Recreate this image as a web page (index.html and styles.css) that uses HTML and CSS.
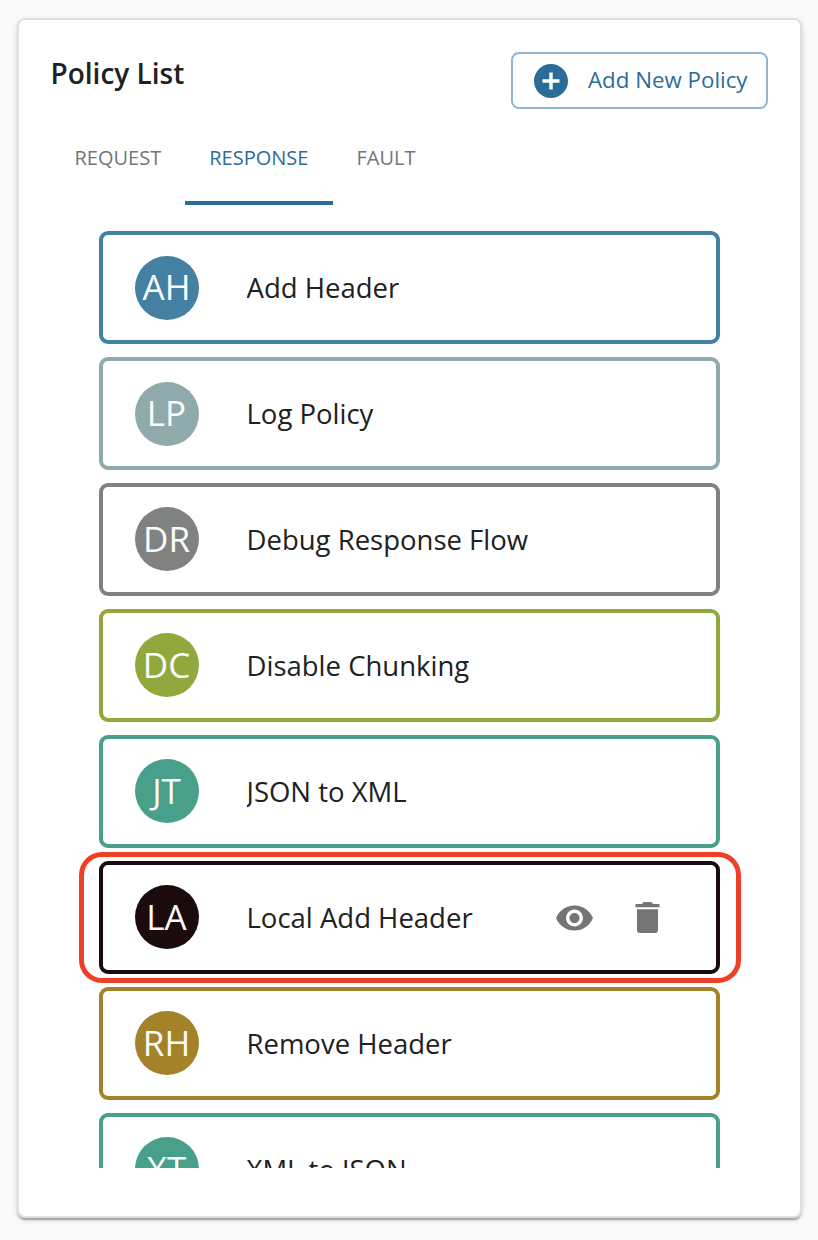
FILE: index.html
```html
<!DOCTYPE html>
<html lang="en">
<head>
<meta charset="utf-8">
<title>Policy List</title>
<link rel="stylesheet" href="styles.css">
</head>
<body>
<main class="panel">
  <header class="panel-header">
    <h2 class="title">Policy List</h2>
    <button class="add-button" type="button">
      <svg class="add-icon" viewBox="2 2 20 20"><path d="M12 2C6.48 2 2 6.48 2 12s4.48 10 10 10 10-4.48 10-10S17.52 2 12 2zm5 11h-4v4h-2v-4H7v-2h4V7h2v4h4v2z"/></svg>
      <span class="add-label">Add New Policy</span>
    </button>
  </header>
  <nav class="tabs">
    <a class="tab">REQUEST</a>
    <a class="tab active">RESPONSE</a>
    <a class="tab">FAULT</a>
  </nav>
  <div class="list">
    <div class="policy blue"><span class="avatar"><span class="initials">AH</span></span><span class="name">Add Header</span></div>
    <div class="policy mist"><span class="avatar"><span class="initials">LP</span></span><span class="name">Log Policy</span></div>
    <div class="policy gray"><span class="avatar"><span class="initials">DR</span></span><span class="name">Debug Response Flow</span></div>
    <div class="policy olive"><span class="avatar"><span class="initials">DC</span></span><span class="name">Disable Chunking</span></div>
    <div class="policy teal"><span class="avatar"><span class="initials">JT</span></span><span class="name">JSON to XML</span></div>
    <div class="policy black highlighted">
      <span class="avatar"><span class="initials">LA</span></span><span class="name">Local Add Header</span>
      <span class="actions">
        <svg class="eye-icon" viewBox="1 4.5 22 15"><path d="M12 4.5C7 4.5 2.73 7.61 1 12c1.73 4.39 6 7.5 11 7.5s9.270-3.110 11-7.500c-1.730-4.390-6-7.500-11-7.500zM12 17c-2.760 0-5-2.240-5-5s2.240-5 5-5 5 2.240 5 5-2.240 5-5 5zm0-8c-1.660 0-3 1.340-3 3s1.340 3 3 3 3-1.340 3-3-1.340-3-3-3z"/></svg>
        <svg class="trash-icon" viewBox="0 0 25 31"><path d="M0.500 2H7L8.500 0H16.500L18 2H24.500V5.300H0.500ZM2 7.200H23V28Q23 31 20 31H5Q2 31 2 28Z"/></svg>
      </span>
    </div>
    <div class="policy gold"><span class="avatar"><span class="initials">RH</span></span><span class="name">Remove Header</span></div>
    <div class="policy teal"><span class="avatar"><span class="initials">XT</span></span><span class="name">XML to JSON</span></div>
  </div>
</main>
</body>
</html>
```

FILE: styles.css
```css
* { box-sizing: border-box; }

body {
  margin: 0;
  padding: 18px 16px 0 17px;
  height: 1240px;
  overflow: hidden;
  background: #fafafa;
  color: #212121;
  font-family: "Open Sans", sans-serif;
}

.panel {
  height: 1200px;
  padding: 32px 32px 32px 31.500px;
  border: 2px solid #e0e0e0;
  border-radius: 8px;
  background: #fff;
  box-shadow: 0 4px 2px -2px rgba(0, 0, 0, .2), 0 2px 2px rgba(0, 0, 0, .14), 0 2px 6px rgba(0, 0, 0, .12);
}

.panel-header {
  display: flex;
  justify-content: space-between;
  height: 57px;
}

.title {
  margin: 2px 0 0;
  font-size: 28px;
  line-height: 38px;
  font-weight: 600;
}

.add-button {
  display: flex;
  align-items: center;
  gap: 20px;
  width: 257px;
  padding: 0 0 0 21px;
  border: 2px solid #95b5cc;
  border-radius: 8px;
  background: #fff;
  color: #2c6c98;
  font: 22.300px "Open Sans", sans-serif;
  white-space: nowrap;
}

.add-icon { width: 34px; height: 34px; fill: currentColor; }
.add-label { padding-bottom: 2px; }

.tabs {
  display: flex;
  height: 96px;
}

.tab {
  height: 96px;
  padding: 34px 24px 0;
  color: #757575;
  font-size: 20px;
  line-height: 30px;
}

.tab.active {
  width: 148px;
  margin-right: -0.700px;
  border-bottom: 4px solid #2c6c98;
  color: #2c6c98;
}

.list {
  display: flex;
  flex-direction: column;
  gap: 13px;
  width: 662px;
  height: 963px;
  margin-left: 28.500px;
  padding: 26px 21px 0 20px;
  overflow: hidden;
}

.policy {
  position: relative;
  display: flex;
  flex: none;
  align-items: center;
  height: 113px;
  padding: 0 56px 0 32px;
  border: 4px solid var(--tone);
  border-radius: 9px;
}

.avatar {
  display: flex;
  align-items: center;
  justify-content: center;
  width: 64px;
  height: 64px;
  padding: 0 1px 2px 0;
  border-radius: 50%;
  background: var(--tone);
  color: #fafafa;
  font-size: 35px;
  line-height: 35px;
}

.policy:nth-child(n+3) .avatar { margin-bottom: 1px; }

.name {
  margin-left: 47.500px;
  overflow: hidden;
  font-size: 27.500px;
  line-height: 38px;
  white-space: nowrap;
}

.actions {
  display: flex;
  align-items: center;
  gap: 42px;
  margin-left: auto;
  fill: #757575;
}

.eye-icon { width: 37px; height: 26px; }
.trash-icon { width: 25px; height: 31px; }

.highlighted::after {
  content: "";
  position: absolute;
  inset: -13px -25px -13px -24px;
  border: 5px solid #ee4027;
  border-radius: 23px;
}

.blue { --tone: #4480a1; }
.mist { --tone: #90a9aa; }
.gray { --tone: #808281; }
.olive { --tone: #91a93c; }
.teal { --tone: #489f8a; }
.black { --tone: #1c0b0c; }
.gold { --tone: #a38229; }
```
